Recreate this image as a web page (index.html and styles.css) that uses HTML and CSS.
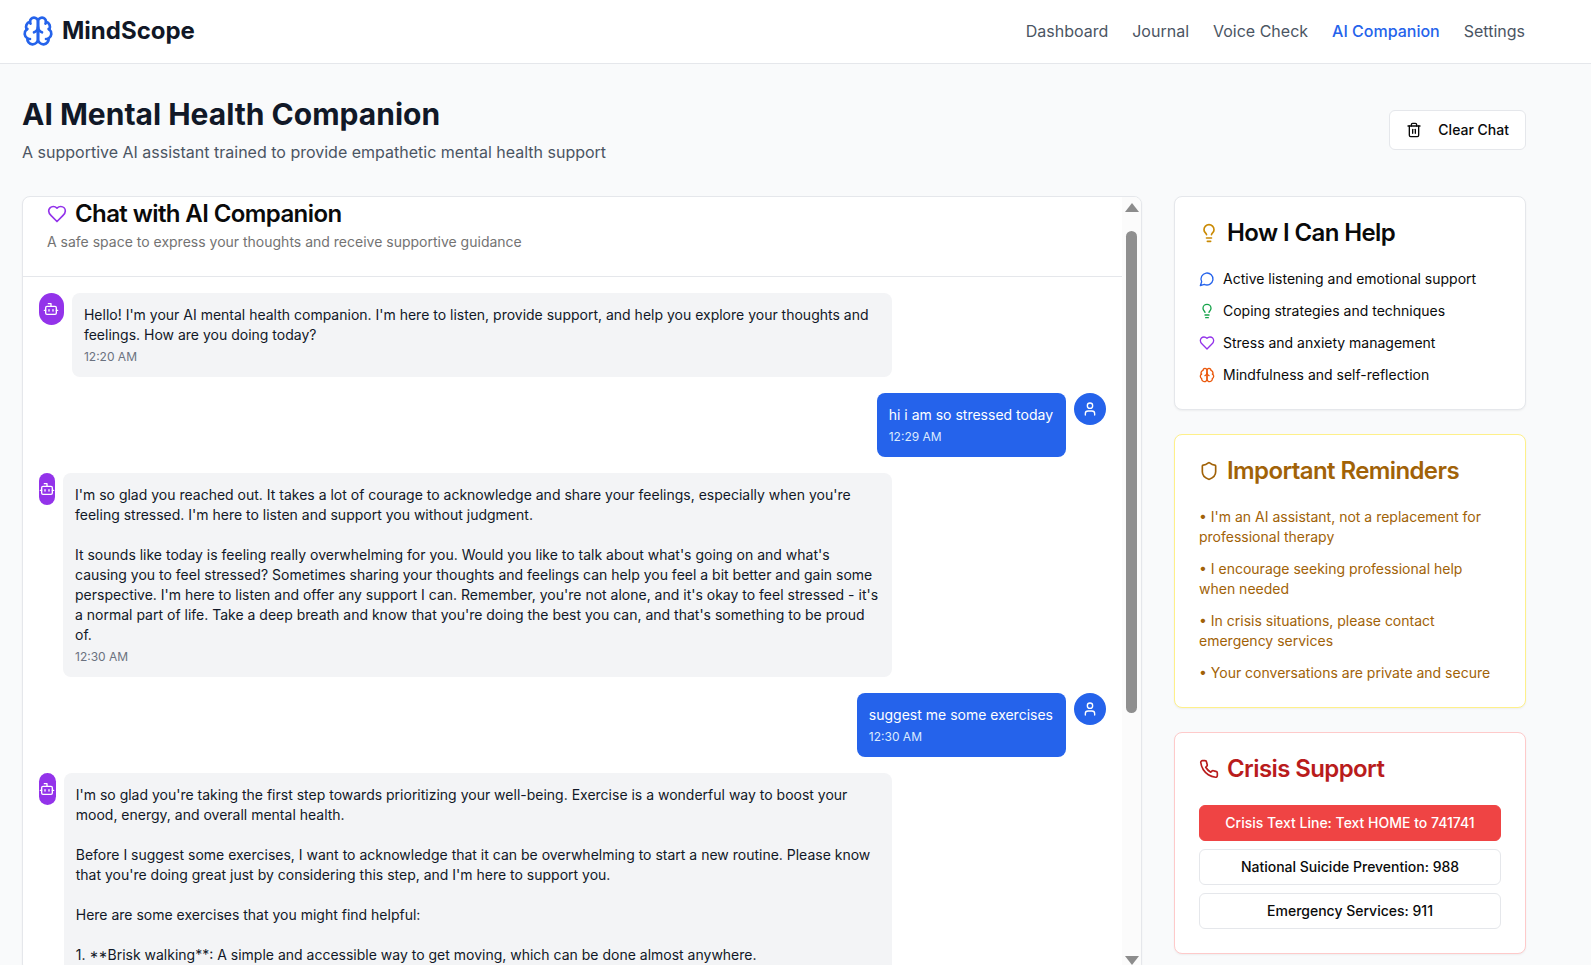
FILE: index.html
```html
<!DOCTYPE html>
<html lang="en">
<head>
    <meta charset="UTF-8">
    <meta name="viewport" content="width=device-width, initial-scale=1.0">
    <title>MindScope - AI Companion</title>
    <link rel="stylesheet" href="styles.css">
</head>
<body>
    <header class="topbar">
        <div class="logo">
            <svg class="logo-icon" viewBox="0 0 24 24"><path d="M12 5a3 3 0 1 0-5.997.125 4 4 0 0 0-2.526 5.77 4 4 0 0 0 .556 6.588A4 4 0 1 0 12 18Z"/><path d="M12 5a3 3 0 1 1 5.997.125 4 4 0 0 1 2.526 5.77 4 4 0 0 1-.556 6.588A4 4 0 1 1 12 18Z"/><path d="M15 13a4.5 4.5 0 0 1-3-4 4.5 4.5 0 0 1-3 4"/><path d="M17.599 6.5a3 3 0 0 0 .399-1.375"/><path d="M6.003 5.125A3 3 0 0 0 6.401 6.5"/><path d="M3.477 10.896a4 4 0 0 1 .585-.396"/><path d="M19.938 10.5a4 4 0 0 1 .585.396"/><path d="M6 18a4 4 0 0 1-1.967-.516"/><path d="M19.967 17.484A4 4 0 0 1 18 18"/></svg>
            <span class="logo-text">MindScope</span>
        </div>
        <nav class="nav">
            <a>Dashboard</a>
            <a>Journal</a>
            <a>Voice Check</a>
            <a class="active">AI Companion</a>
            <a>Settings</a>
        </nav>
    </header>

    <main class="page">
        <div class="page-head">
            <div>
                <h1>AI Mental Health Companion</h1>
                <p class="page-sub">A supportive AI assistant trained to provide empathetic mental health support</p>
            </div>
            <button class="clear-btn">
                <svg class="icon" viewBox="0 0 24 24"><path d="M3 6h18"/><path d="M19 6v14c0 1-1 2-2 2H7c-1 0-2-1-2-2V6"/><path d="M8 6V4c0-1 1-2 2-2h4c1 0 2 1 2 2v2"/><path d="M10 11v6"/><path d="M14 11v6"/></svg>
                Clear Chat
            </button>
        </div>

        <div class="layout">
            <section class="chat-card">
                <div class="chat-scroll">
                    <div class="chat-head">
                        <h2 class="chat-title">
                            <svg class="icon-lg purple" viewBox="0 0 24 24"><path d="M19 14c1.49-1.46 3-3.21 3-5.5A5.5 5.5 0 0 0 16.5 3c-1.76 0-3 .5-4.5 2-1.5-1.5-2.74-2-4.5-2A5.5 5.5 0 0 0 2 8.500c0 2.300 1.500 4.050 3 5.500l7 7Z"/></svg>
                            Chat with AI Companion
                        </h2>
                        <p class="chat-sub">A safe space to express your thoughts and receive supportive guidance</p>
                    </div>
                    <div class="messages">
                        <div class="msg">
                            <div class="avatar bot"><svg class="icon" viewBox="0 0 24 24"><path d="M12 8V4H8"/><rect width="16" height="12" x="4" y="8" rx="2"/><path d="M2 14h2"/><path d="M20 14h2"/><path d="M15 13v2"/><path d="M9 13v2"/></svg></div>
                            <div class="bubble">
                                <div class="bubble-text">Hello! I'm your AI mental health companion. I'm here to listen, provide support, and help you explore your thoughts and feelings. How are you doing today?</div>
                                <div class="time">12:20 AM</div>
                            </div>
                        </div>
                        <div class="msg user">
                            <div class="bubble">
                                <div class="bubble-text">hi i am so stressed today</div>
                                <div class="time">12:29 AM</div>
                            </div>
                            <div class="avatar"><svg class="icon" viewBox="0 0 24 24"><path d="M19 21v-2a4 4 0 0 0-4-4H9a4 4 0 0 0-4 4v2"/><circle cx="12" cy="7" r="4"/></svg></div>
                        </div>
                        <div class="msg">
                            <div class="avatar bot"><svg class="icon" viewBox="0 0 24 24"><path d="M12 8V4H8"/><rect width="16" height="12" x="4" y="8" rx="2"/><path d="M2 14h2"/><path d="M20 14h2"/><path d="M15 13v2"/><path d="M9 13v2"/></svg></div>
                            <div class="bubble bubble-wide">
                                <div class="bubble-text">I'm so glad you reached out. It takes a lot of courage to acknowledge and share your feelings, especially when you're feeling stressed. I'm here to listen and support you without judgment.

It sounds like today is feeling really overwhelming for you. Would you like to talk about what's going on and what's causing you to feel stressed? Sometimes sharing your thoughts and feelings can help you feel a bit better and gain some perspective. I'm here to listen and offer any support I can. Remember, you're not alone, and it's okay to feel stressed - it's a normal part of life. Take a deep breath and know that you're doing the best you can, and that's something to be proud of.</div>
                                <div class="time">12:30 AM</div>
                            </div>
                        </div>
                        <div class="msg user">
                            <div class="bubble">
                                <div class="bubble-text">suggest me some exercises</div>
                                <div class="time">12:30 AM</div>
                            </div>
                            <div class="avatar"><svg class="icon" viewBox="0 0 24 24"><path d="M19 21v-2a4 4 0 0 0-4-4H9a4 4 0 0 0-4 4v2"/><circle cx="12" cy="7" r="4"/></svg></div>
                        </div>
                        <div class="msg">
                            <div class="avatar bot"><svg class="icon" viewBox="0 0 24 24"><path d="M12 8V4H8"/><rect width="16" height="12" x="4" y="8" rx="2"/><path d="M2 14h2"/><path d="M20 14h2"/><path d="M15 13v2"/><path d="M9 13v2"/></svg></div>
                            <div class="bubble bubble-long">
                                <div class="bubble-text">I'm so glad you're taking the first step towards prioritizing your well-being. Exercise is a wonderful way to boost your mood, energy, and overall mental health.

Before I suggest some exercises, I want to acknowledge that it can be overwhelming to start a new routine. Please know that you're doing great just by considering this step, and I'm here to support you.

Here are some exercises that you might find helpful:</div>
                                <div class="bubble-text list-line">1. <span class="stars">**</span>Brisk walking**: A simple and accessible way to get moving, which can be done almost anywhere.</div>
                            </div>
                        </div>
                    </div>
                </div>
                <div class="scrollbar">
                    <div class="arrow-up"></div>
                    <div class="thumb"></div>
                    <div class="arrow-down"></div>
                </div>
            </section>

            <aside class="sidebar">
                <section class="side-card">
                    <h3 class="side-title">
                        <svg class="icon-lg yellow" viewBox="0 0 24 24"><path d="M15 14c.2-1 .7-1.700 1.500-2.500 1-.9 1.500-2.200 1.500-3.500A6 6 0 0 0 6 8c0 1 .2 2.200 1.500 3.500.7.7 1.300 1.500 1.500 2.500"/><path d="M9 18h6"/><path d="M10 22h4"/></svg>
                        How I Can Help
                    </h3>
                    <ul class="help-list">
                        <li><svg class="icon blue" viewBox="0 0 24 24"><path d="M7.900 20A9 9 0 1 0 4 16.100L2 22Z"/></svg>Active listening and emotional support</li>
                        <li><svg class="icon green" viewBox="0 0 24 24"><path d="M15 14c.2-1 .7-1.700 1.500-2.500 1-.9 1.500-2.200 1.500-3.500A6 6 0 0 0 6 8c0 1 .2 2.200 1.500 3.500.7.7 1.300 1.500 1.500 2.500"/><path d="M9 18h6"/><path d="M10 22h4"/></svg>Coping strategies and techniques</li>
                        <li><svg class="icon purple" viewBox="0 0 24 24"><path d="M19 14c1.490-1.460 3-3.210 3-5.500A5.500 5.500 0 0 0 16.500 3c-1.760 0-3 .5-4.500 2-1.500-1.500-2.740-2-4.500-2A5.500 5.500 0 0 0 2 8.500c0 2.300 1.500 4.050 3 5.500l7 7Z"/></svg>Stress and anxiety management</li>
                        <li><svg class="icon orange" viewBox="0 0 24 24"><path d="M12 5a3 3 0 1 0-5.997.125 4 4 0 0 0-2.526 5.77 4 4 0 0 0 .556 6.588A4 4 0 1 0 12 18Z"/><path d="M12 5a3 3 0 1 1 5.997.125 4 4 0 0 1 2.526 5.77 4 4 0 0 1-.556 6.588A4 4 0 1 1 12 18Z"/><path d="M15 13a4.500 4.500 0 0 1-3-4 4.500 4.500 0 0 1-3 4"/><path d="M3.477 10.896a4 4 0 0 1 .585-.396"/><path d="M19.938 10.500a4 4 0 0 1 .585.396"/></svg>Mindfulness and self-reflection</li>
                    </ul>
                </section>

                <section class="side-card reminders">
                    <h3 class="side-title">
                        <svg class="icon-lg" viewBox="0 0 24 24"><path d="M20 13c0 5-3.500 7.500-7.660 8.950a1 1 0 0 1-.67-.01C7.500 20.500 4 18 4 13V6a1 1 0 0 1 1-1c2 0 4.500-1.200 6.240-2.720a1.170 1.170 0 0 1 1.520 0C14.510 3.810 17 5 19 5a1 1 0 0 1 1 1z"/></svg>
                        Important Reminders
                    </h3>
                    <div class="reminder-list">
                        <p>• I'm an AI assistant, not a replacement for professional therapy</p>
                        <p>• I encourage seeking professional help when needed</p>
                        <p>• In crisis situations, please contact emergency services</p>
                        <p>• Your conversations are private and secure</p>
                    </div>
                </section>

                <section class="side-card crisis">
                    <h3 class="side-title">
                        <svg class="icon-lg" viewBox="0 0 24 24"><path d="M22 16.920v3a2 2 0 0 1-2.180 2 19.790 19.790 0 0 1-8.630-3.070 19.500 19.500 0 0 1-6-6 19.790 19.790 0 0 1-3.070-8.670A2 2 0 0 1 4.110 2h3a2 2 0 0 1 2 1.720 12.840 12.840 0 0 0 .7 2.810 2 2 0 0 1-.45 2.110L8.090 9.910a16 16 0 0 0 6 6l1.270-1.270a2 2 0 0 1 2.110-.45 12.840 12.840 0 0 0 2.810.7A2 2 0 0 1 22 16.920z"/></svg>
                        Crisis Support
                    </h3>
                    <div class="crisis-list">
                        <button class="crisis-btn primary">Crisis Text Line: Text HOME to 741741</button>
                        <button class="crisis-btn">National Suicide Prevention: 988</button>
                        <button class="crisis-btn">Emergency Services: 911</button>
                    </div>
                </section>
            </aside>
        </div>
    </main>
</body>
</html>
```

FILE: styles.css
```css
* {
    box-sizing: border-box;
}
html, body {
    height: 100%;
    overflow: hidden;
}
body {
    margin: 0;
    font-family: Inter, "Liberation Sans", sans-serif;
    font-size: 14px;
    line-height: 20px;
    color: #0a0a0a;
    background-color: #f9fafb;
}
h1, h2, h3, p, ul {
    margin: 0;
    padding: 0;
}
svg {
    fill: none;
    stroke: currentColor;
    stroke-width: 2;
    stroke-linecap: round;
    stroke-linejoin: round;
    flex-shrink: 0;
}
.icon {
    width: 16px;
    height: 16px;
}
.icon-lg {
    width: 20px;
    height: 20px;
}
.purple { color: #9333ea; }
.yellow { color: #ca8a04; }
.blue { color: #2563eb; }
.green { color: #16a34a; }
.orange { color: #ea580c; }

.topbar {
    height: 64px;
    display: flex;
    align-items: center;
    justify-content: space-between;
    padding: 0 66px 1px 22px;
    background-color: white;
    border-bottom: 1px solid #e5e7eb;
}
.logo {
    display: flex;
    align-items: center;
    gap: 8px;
}
.logo-icon {
    width: 32px;
    height: 32px;
    color: #2563eb;
}
.logo-text {
    font-size: 24px;
    line-height: 32px;
    font-weight: 700;
    color: #111827;
}
.nav {
    display: flex;
    gap: 24px;
}
.nav a {
    font-size: 16px;
    line-height: 24px;
    font-weight: 400;
    color: #4b5563;
}
.nav a.active {
    color: #2563eb;
    font-weight: 500;
}

.page {
    padding: 32px 65px 0 22px;
}
.page-head {
    display: flex;
    align-items: center;
    justify-content: space-between;
    margin-bottom: 32px;
}
h1 {
    font-size: 30px;
    line-height: 36px;
    font-weight: 700;
    color: #111827;
}
.page-sub {
    margin-top: 8px;
    font-size: 16px;
    line-height: 24px;
    color: #4b5563;
}
.clear-btn {
    display: flex;
    align-items: center;
    gap: 16px;
    height: 40px;
    padding: 0 16px;
    font: 500 14px/20px Inter, sans-serif;
    color: #0a0a0a;
    background-color: white;
    border: 1px solid #e5e7eb;
    border-radius: 6px;
}

.layout {
    display: grid;
    grid-template-columns: repeat(4, 1fr);
    gap: 32px;
    align-items: start;
}
.chat-card {
    grid-column: span 3;
    height: 776px;
    display: flex;
    background-color: white;
    border: 1px solid #e5e7eb;
    border-radius: 8px;
    box-shadow: 0 1px 2px rgba(0,0,0,0.05);
    overflow: hidden;
}
.chat-scroll {
    flex: 1;
    min-width: 0;
    overflow: hidden;
}
.chat-head {
    padding: 5px 24px 24px;
    border-bottom: 1px solid #e5e7eb;
}
.chat-title {
    display: flex;
    align-items: center;
    gap: 8px;
    font-size: 24px;
    line-height: 24px;
    font-weight: 600;
    letter-spacing: -0.6px;
}
.chat-sub {
    margin-top: 6px;
    color: #737373;
}
.messages {
    display: flex;
    flex-direction: column;
    gap: 16px;
    padding: 16px;
}
.msg {
    display: flex;
    gap: 8px;
    max-width: 79.9%;
}
.msg.user {
    align-self: flex-end;
}
.avatar {
    width: 32px;
    height: 32px;
    display: flex;
    align-items: center;
    justify-content: center;
    border-radius: 9999px;
    color: white;
    background-color: #2563eb;
}
.avatar.bot {
    background-color: #9333ea;
}
.bubble {
    padding: 12px;
    border-radius: 8px;
    background-color: #f3f4f6;
    color: #111827;
}
.bubble-text {
    white-space: pre-wrap;
}
.list-line {
    margin-top: 20px;
}
.bubble-long {
    flex-basis: 1558px;
}
.stars {
    font-feature-settings: "case";
}
.msg.user .bubble {
    padding-right: 13px;
    background-color: #2563eb;
    color: white;
}
.time {
    margin-top: 4px;
    font-size: 12px;
    line-height: 16px;
    color: #6b7280;
}
.msg.user .time {
    color: #dbeafe;
}

.scrollbar {
    width: 19px;
    flex-shrink: 0;
    display: flex;
    flex-direction: column;
    align-items: center;
    padding: 6px 0;
    background-color: #fbfbfb;
}
.arrow-up, .arrow-down {
    width: 0;
    height: 0;
    border-left: 7px solid transparent;
    border-right: 7px solid transparent;
}
.arrow-up {
    border-bottom: 9px solid #8c8c8c;
}
.arrow-down {
    margin-top: auto;
    border-top: 9px solid #8c8c8c;
}
.thumb {
    width: 11px;
    height: 482px;
    margin-top: 19px;
    border-radius: 6px;
    background-color: #8f8f8f;
}

.sidebar {
    display: flex;
    flex-direction: column;
    gap: 24px;
}
.side-card {
    padding: 24px;
    background-color: white;
    border: 1px solid #e5e7eb;
    border-radius: 8px;
    box-shadow: 0 1px 2px rgba(0,0,0,0.05);
}
.side-title {
    display: flex;
    align-items: center;
    gap: 8px;
    margin-bottom: 24px;
    font-size: 24px;
    line-height: 24px;
    font-weight: 600;
    letter-spacing: -0.6px;
}
.help-list {
    display: flex;
    flex-direction: column;
    gap: 12px;
    list-style: none;
}
.help-list li {
    display: flex;
    align-items: center;
    gap: 8px;
}
.reminders {
    border-color: #fef08a;
}
.reminders .side-title, .reminder-list {
    color: #a16207;
}
.reminder-list {
    display: flex;
    flex-direction: column;
    gap: 12px;
}
.crisis {
    border-color: #fecaca;
}
.crisis .side-title {
    color: #b91c1c;
}
.crisis-list {
    display: flex;
    flex-direction: column;
    gap: 8px;
}
.crisis-btn {
    height: 36px;
    font: 500 14px/20px Inter, sans-serif;
    color: #0a0a0a;
    background-color: white;
    border: 1px solid #e5e7eb;
    border-radius: 6px;
}
.crisis-btn.primary {
    color: white;
    background-color: #ef4444;
    border-color: #ef4444;
}
```
